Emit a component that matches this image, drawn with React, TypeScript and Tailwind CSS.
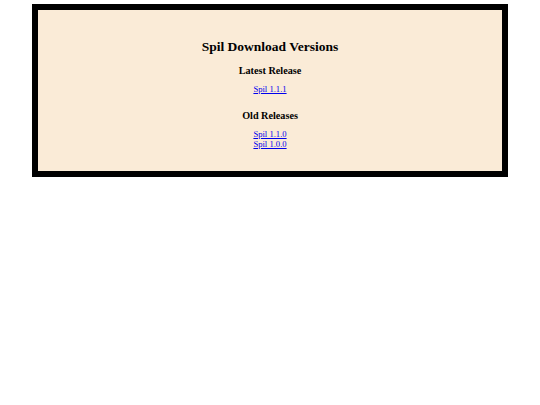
const latest = [{ label: "Spil 1.1.1", href: "#spil-1.1.1" }];

const older = [
  { label: "Spil 1.1.0", href: "#spil-1.1.0" },
  { label: "Spil 1.0.0", href: "#spil-1.0.0" },
];

function ReleaseLink({ label, href }: { label: string; href: string }) {
  return (
    <a href={href} className="block text-[8.6px] leading-[10px] text-[#0000ee] underline">
      {label}
    </a>
  );
}

export default function App() {
  return (
    <div className="min-h-[405px] bg-white pt-1 font-['Liberation_Serif',serif] text-black">
      <div className="mx-auto w-[476px] border-[6px] border-black bg-[#faebd7] pt-[29px] pb-[22px] text-center">
        <h2 className="text-[13.5px] leading-[16px] font-bold">Spil Download Versions</h2>

        <h3 className="mt-[10px] text-[10.2px] leading-[12px] font-bold">Latest Release</h3>
        <div className="mt-[7px] flex flex-col items-center">
          {latest.map((r) => (
            <ReleaseLink key={r.href} {...r} />
          ))}
        </div>

        <h3 className="mt-[16px] text-[10.2px] leading-[12px] font-bold">Old Releases</h3>
        <div className="mt-[7px] flex flex-col items-center">
          {older.map((r) => (
            <ReleaseLink key={r.href} {...r} />
          ))}
        </div>
      </div>
    </div>
  );
}
